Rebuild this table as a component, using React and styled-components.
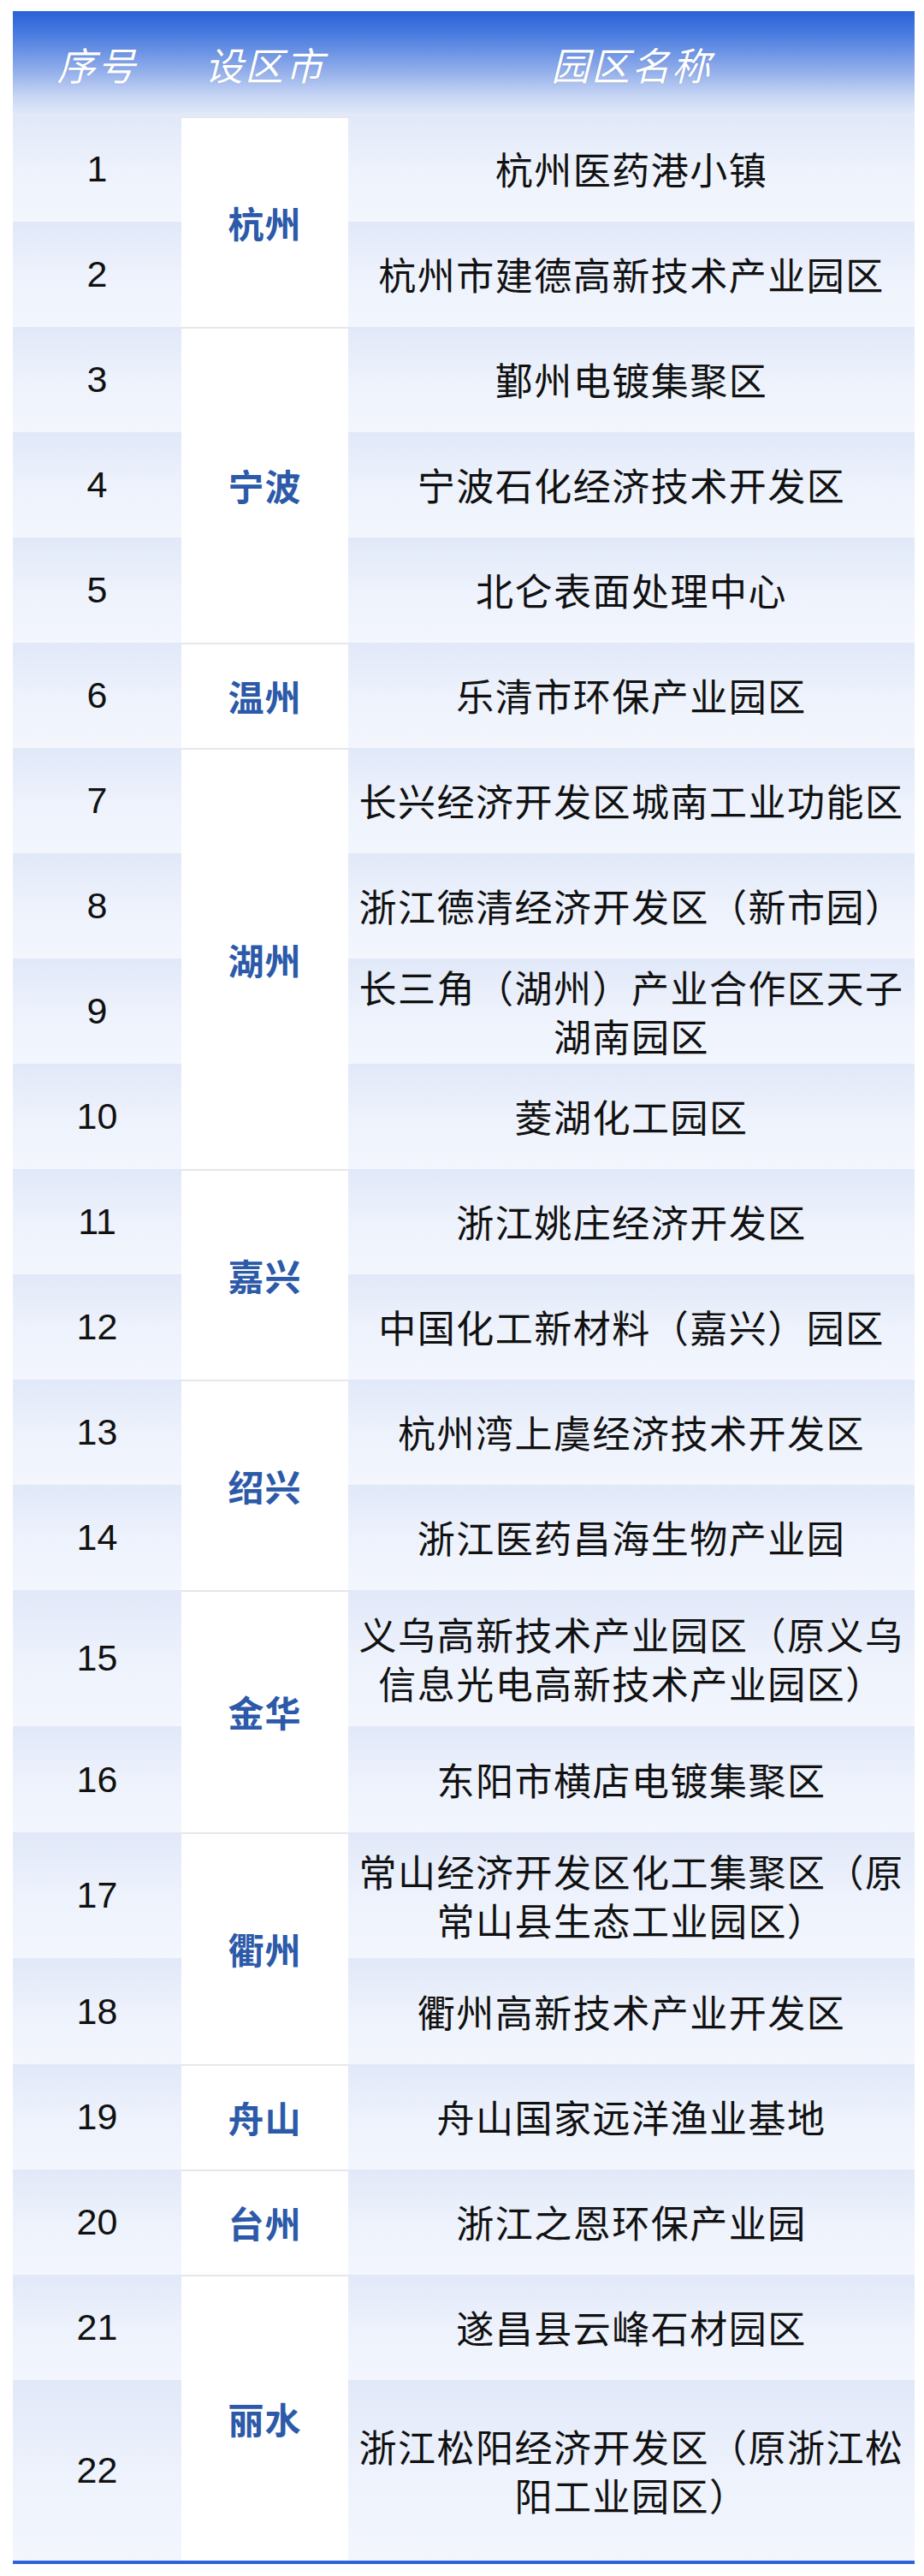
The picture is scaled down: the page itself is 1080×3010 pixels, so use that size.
import React from "react";
import styled, { createGlobalStyle } from "styled-components";

const GlobalStyle = createGlobalStyle`
  body {
    margin: 0;
    background: #ffffff;
    font-family: "Liberation Sans", "Noto Sans CJK SC", sans-serif;
  }
`;

const Page = styled.div`
  width: 1080px;
  height: 3010px;
  padding-top: 13px;
  box-sizing: border-box;
`;

const Table = styled.div`
  margin-left: 15px;
  width: 1054px;
  border-bottom: 4px solid #2b63d9;
`;

const Header = styled.div`
  display: grid;
  grid-template-columns: 197px 195px 1fr;
  height: 123px;
  background: linear-gradient(
    to bottom,
    #2962d8 0%,
    #4f80e0 25%,
    #8eabea 55%,
    #c9d7f4 82%,
    #e4ebf9 100%
  );
`;

const HeadCell = styled.div`
  display: flex;
  align-items: center;
  justify-content: center;
  color: #ffffff;
  font-family: "Noto Sans CJK SC", sans-serif;
  font-size: 45px;
  font-style: italic;
  letter-spacing: 2px;
  text-shadow: 0 0 1px rgba(40, 60, 110, 0.45);
`;

const Group = styled.div`
  display: grid;
  grid-template-columns: 197px 195px 1fr;
  grid-template-rows: ${(p) => p.$rows};
`;

const City = styled.div`
  grid-column: 2;
  grid-row: 1 / -1;
  display: flex;
  align-items: center;
  justify-content: center;
  background: #ffffff;
  box-shadow: inset 0 2px 0 #e6e7ea;
  color: #2c5aa9;
  font-family: "Noto Sans CJK SC", sans-serif;
  font-weight: 700;
  font-size: 42px;
  letter-spacing: 1px;
`;

const Shade = styled.div`
  display: flex;
  align-items: center;
  justify-content: center;
  text-align: center;
  background: linear-gradient(to bottom, #e1e8f8 0%, #edf2fc 50%, #f3f6fd 100%);
  color: #111111;
`;

const Num = styled(Shade)`
  grid-column: 1;
  font-family: "Liberation Sans Narrow", "Liberation Sans", sans-serif;
  font-size: 43px;
`;

const Name = styled(Shade)`
  grid-column: 3;
  padding: 0 6px;
  font-family: "Noto Sans CJK SC", sans-serif;
  font-size: 44px;
  letter-spacing: 1.5px;
  line-height: 57px;
`;

const groups = [
  { city: "杭州", rows: [[1, "杭州医药港小镇", 123], [2, "杭州市建德高新技术产业园区", 123]] },
  {
    city: "宁波",
    rows: [
      [3, "鄞州电镀集聚区", 123],
      [4, "宁波石化经济技术开发区", 123],
      [5, "北仑表面处理中心", 123],
    ],
  },
  { city: "温州", rows: [[6, "乐清市环保产业园区", 123]] },
  {
    city: "湖州",
    rows: [
      [7, "长兴经济开发区城南工业功能区", 123],
      [8, "浙江德清经济开发区（新市园）", 123],
      [9, "长三角（湖州）产业合作区天子湖南园区", 123],
      [10, "菱湖化工园区", 123],
    ],
  },
  { city: "嘉兴", rows: [[11, "浙江姚庄经济开发区", 123], [12, "中国化工新材料（嘉兴）园区", 123]] },
  { city: "绍兴", rows: [[13, "杭州湾上虞经济技术开发区", 123], [14, "浙江医药昌海生物产业园", 123]] },
  {
    city: "金华",
    rows: [
      [15, "义乌高新技术产业园区（原义乌信息光电高新技术产业园区）", 159],
      [16, "东阳市横店电镀集聚区", 124],
    ],
  },
  {
    city: "衢州",
    rows: [
      [17, "常山经济开发区化工集聚区（原常山县生态工业园区）", 147],
      [18, "衢州高新技术产业开发区", 124],
    ],
  },
  { city: "舟山", rows: [[19, "舟山国家远洋渔业基地", 123]] },
  { city: "台州", rows: [[20, "浙江之恩环保产业园", 123]] },
  {
    city: "丽水",
    rows: [
      [21, "遂昌县云峰石材园区", 123],
      [22, "浙江松阳经济开发区（原浙江松阳工业园区）", 211],
    ],
  },
];

export default function App() {
  return (
    <Page>
      <GlobalStyle />
      <Table>
        <Header>
          <HeadCell>序号</HeadCell>
          <HeadCell>设区市</HeadCell>
          <HeadCell>园区名称</HeadCell>
        </Header>
        {groups.map((g) => (
          <Group key={g.city} $rows={g.rows.map((r) => `${r[2]}px`).join(" ")}>
            <City>{g.city}</City>
            {g.rows.map(([n, name]) => (
              <React.Fragment key={n}>
                <Num>{n}</Num>
                <Name>{name}</Name>
              </React.Fragment>
            ))}
          </Group>
        ))}
      </Table>
    </Page>
  );
}
